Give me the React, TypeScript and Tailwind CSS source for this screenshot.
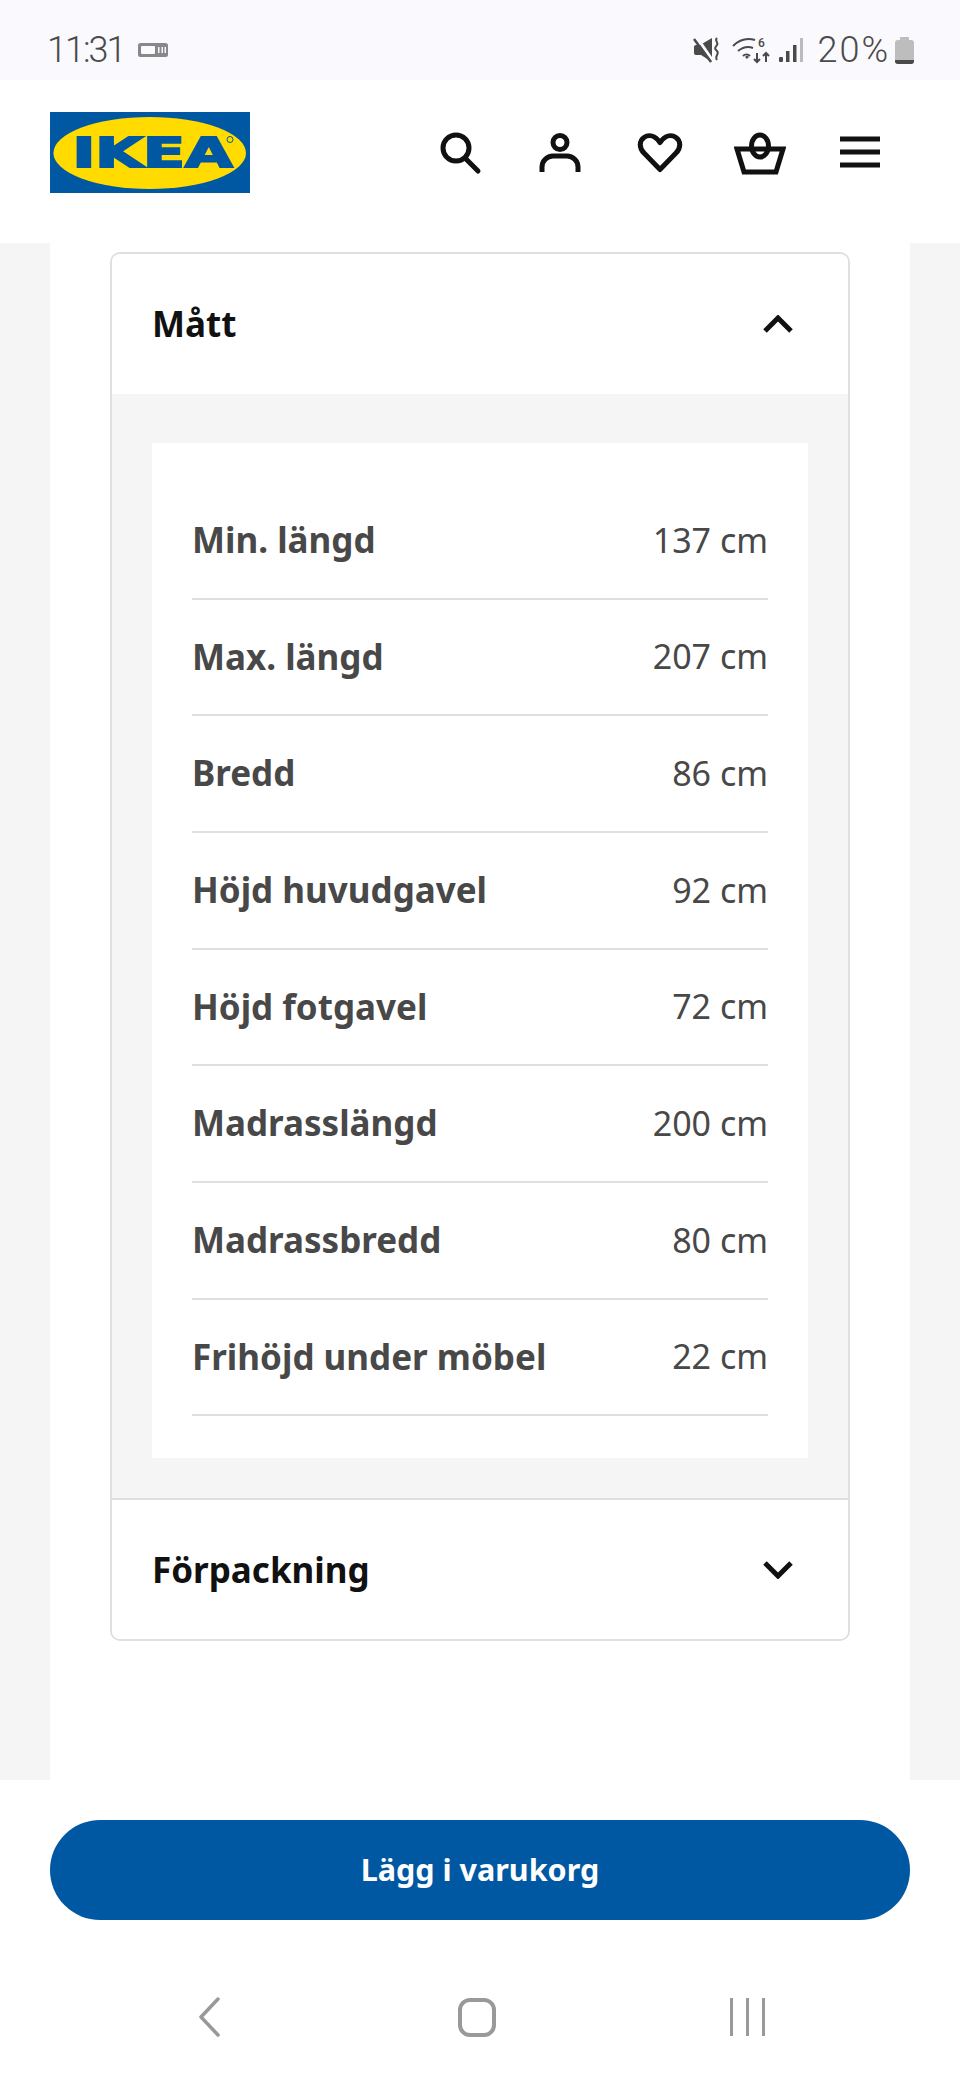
// App.tsx
const rows = [
  ['Min. längd', '137 cm'],
  ['Max. längd', '207 cm'],
  ['Bredd', '86 cm'],
  ['Höjd huvudgavel', '92 cm'],
  ['Höjd fotgavel', '72 cm'],
  ['Madrasslängd', '200 cm'],
  ['Madrassbredd', '80 cm'],
  ['Frihöjd under möbel', '22 cm'],
];

const StatusBar = () => (
  <div className="h-[80px] bg-[#f9f9fe] flex items-center justify-between pl-[47px] pr-[46px] pt-[20px] text-[#4a4a4a] font-['Roboto',sans-serif] font-light text-[36px] leading-none">
    <div className="flex items-center">
      <span className="tracking-[-2px]">11:31</span>
      <svg className="ml-[14px]" width="30" height="14" viewBox="0 0 30 14">
        <rect width="30" height="14" rx="2.500" fill="#888" />
        <rect x="3" y="3" width="14" height="8" rx="1" fill="#f9f9fe" />
        <rect x="20" y="4" width="1.500" height="6" fill="#f9f9fe" />
        <rect x="23.500" y="4" width="1.500" height="6" fill="#f9f9fe" />
        <rect x="26.500" y="4" width="1.500" height="6" fill="#f9f9fe" />
      </svg>
    </div>
    <div className="flex items-center">
      <svg width="27" height="26" viewBox="0 0 27 26" fill="#4a4a4a">
        <path d="M1 10a2 2 0 0 1 2-2h4L19 1v24L8 18H3a2 2 0 0 1-2-2z" />
        <path d="M5 2l15 22" stroke="#f9f9fe" strokeWidth="3" />
        <path d="M1 2l17 23" stroke="#4a4a4a" strokeWidth="2.500" />
        <path d="M24 1c-3 3 2 4 0 7s-3 3 0 6-3 5 0 9" fill="none" stroke="#4a4a4a" strokeWidth="2" />
      </svg>
      <svg className="ml-[12px]" width="39" height="28" viewBox="0 0 39 28" fill="none" stroke="#4a4a4a" strokeWidth="2">
        <path d="M1 10c7-7 15-8 22-6M6 15c5-4 10-5 15-3M11 20c2-2 5-2 7 0" />
        <circle cx="15" cy="21" r="1.600" fill="#4a4a4a" stroke="none" />
        <path d="M25 17v9M22 23l3 3 3-3M34 26v-9M31 20l3-3 3 3" />
        <text x="26" y="11" fontSize="12" fill="#4a4a4a" stroke="none" fontFamily="Roboto, sans-serif" fontWeight="500">6</text>
      </svg>
      <svg className="ml-[8px]" width="25" height="26" viewBox="0 0 25 26">
        <rect x="0" y="20" width="4" height="5" rx="1" fill="#4a4a4a" />
        <rect x="7" y="14" width="3.500" height="11" fill="#4a4a4a" />
        <rect x="14" y="8" width="3.500" height="17" fill="#4a4a4a" />
        <rect x="21" y="1" width="3" height="24" fill="#bbb" />
      </svg>
      <span className="ml-[13px] tracking-[2px]">20%</span>
      <svg className="ml-[5px]" width="19" height="28" viewBox="0 0 19 28">
        <path d="M5 2a1 1 0 0 1 1-1h7a1 1 0 0 1 1 1v2h2a3 3 0 0 1 3 3v18a3 3 0 0 1-3 3H3a3 3 0 0 1-3-3V7a3 3 0 0 1 3-3h2z" fill="#bdbdbd" />
        <path d="M0 24h19v1a3 3 0 0 1-3 3H3a3 3 0 0 1-3-3z" fill="#4a4a4a" />
      </svg>
    </div>
  </div>
);

const IkeaLogo = () => (
  <svg width="200" height="81" viewBox="0 0 200 81">
    <rect width="200" height="81" fill="#0058a3" />
    <ellipse cx="99.700" cy="41" rx="96.300" ry="36" fill="#ffdb00" />
    <text
      x="102.500"
      y="55"
      textAnchor="middle"
      textLength="160"
      lengthAdjust="spacingAndGlyphs"
      fontFamily="'DejaVu Sans', sans-serif"
      fontWeight="700"
      fontSize="41"
      fill="#0058a3"
      stroke="#0058a3"
      strokeWidth="2"
    >
      IKEA
    </text>
    <circle cx="180" cy="27.500" r="3" fill="#ffdb00" stroke="#0058a3" strokeWidth="1" />
  </svg>
);

const NavIcon = ({ children }: { children: React.ReactNode }) => (
  <button className="w-[100px] h-[100px] flex items-center justify-center">
    <svg width="52" height="44" viewBox="0 0 52 44" fill="none" stroke="#111" strokeWidth="5">
      {children}
    </svg>
  </button>
);

const Header = () => (
  <div className="h-[163px] bg-white flex items-center justify-between pl-[50px] pr-[50px] pb-[18px]">
    <IkeaLogo />
    <div className="flex items-center">
      <NavIcon>
        <circle cx="22" cy="17" r="13" />
        <path d="M31 27l13 13" strokeLinecap="round" />
      </NavIcon>
      <NavIcon>
        <circle cx="26" cy="11.500" r="7" />
        <path d="M8 41v-5c0-6 5-11 11-11h14c6 0 11 5 11 11v5" />
      </NavIcon>
      <NavIcon>
        <path d="M26 38.500L10 22c-5-5-5-12 0-15.500s11-2 16 5c5-7 11-8.500 16-5s5 10.500 0 15.500z" strokeLinejoin="round" />
      </NavIcon>
      <NavIcon>
        <path d="M3 18h46l-7 23H10z" />
        <ellipse cx="26" cy="15" rx="8.500" ry="11" />
      </NavIcon>
      <NavIcon>
        <path d="M6 8h40M6 21h40M6 34h40" />
      </NavIcon>
    </div>
  </div>
);

const Chevron = ({ up }: { up?: boolean }) => (
  <svg width="30" height="18" viewBox="0 0 30 18" fill="none" stroke="#111" strokeWidth="5">
    <path d={up ? 'M2 16L15 3l13 13' : 'M2 2l13 13L28 2'} />
  </svg>
);

const Card = () => (
  <div className="border-2 border-[#dfdfdf] rounded-[10px] overflow-hidden">
    <div className="h-[140px] flex items-center justify-between pl-[40px] pr-[55px] bg-white">
      <span className="text-[35px] font-bold text-[#111]">Mått</span>
      <Chevron up />
    </div>
    <div className="bg-[#f5f5f5] pt-[49px] pb-[40px] px-[40px]">
      <div className="bg-white px-[40px] pt-[40px] pb-[42px]">
        {rows.map(([label, value]) => (
          <div key={label} className="h-[116.67px] border-b-2 border-[#dfdfdf] flex items-center justify-between text-[#484848]">
            <span className="text-[35px] font-bold">{label}</span>
            <span className="text-[34px]">{value}</span>
          </div>
        ))}
      </div>
    </div>
    <div className="h-[141px] border-t-2 border-[#dfdfdf] flex items-center justify-between pl-[40px] pr-[55px] bg-white">
      <span className="text-[35px] font-bold text-[#111]">Förpackning</span>
      <Chevron />
    </div>
  </div>
);

const BottomNav = () => (
  <div className="flex-1">
    <div className="flex items-center pl-[198px] pt-[77px]">
      <svg width="22" height="40" viewBox="0 0 22 40" fill="none" stroke="#999" strokeWidth="3.500" strokeLinecap="round" strokeLinejoin="round">
        <path d="M20 2L3 20l17 18" />
      </svg>
      <div className="ml-[238px] w-[38px] h-[39px] border-[4px] border-[#999] rounded-[12px]" />
      <div className="ml-[234px] flex gap-[13px]">
        <div className="w-[3px] h-[38px] bg-[#999]" />
        <div className="w-[3px] h-[38px] bg-[#999]" />
        <div className="w-[3px] h-[38px] bg-[#999]" />
      </div>
    </div>
  </div>
);

export default function App() {
  return (
    <div className="w-[960px] h-[2080px] flex flex-col bg-white font-['Noto_Sans',sans-serif] overflow-hidden">
      <StatusBar />
      <Header />
      <div className="h-[1537px] bg-[#f5f5f5] px-[50px]">
        <div className="h-full bg-white px-[60px] pt-[9px]">
          <Card />
        </div>
      </div>
      <div className="flex-1 flex flex-col bg-white pt-[40px]">
        <div className="mx-[50px] h-[100px] rounded-full bg-[#0058a3] flex items-center justify-center text-white text-[30.5px] font-bold">
          Lägg i varukorg
        </div>
        <BottomNav />
      </div>
    </div>
  );
}
